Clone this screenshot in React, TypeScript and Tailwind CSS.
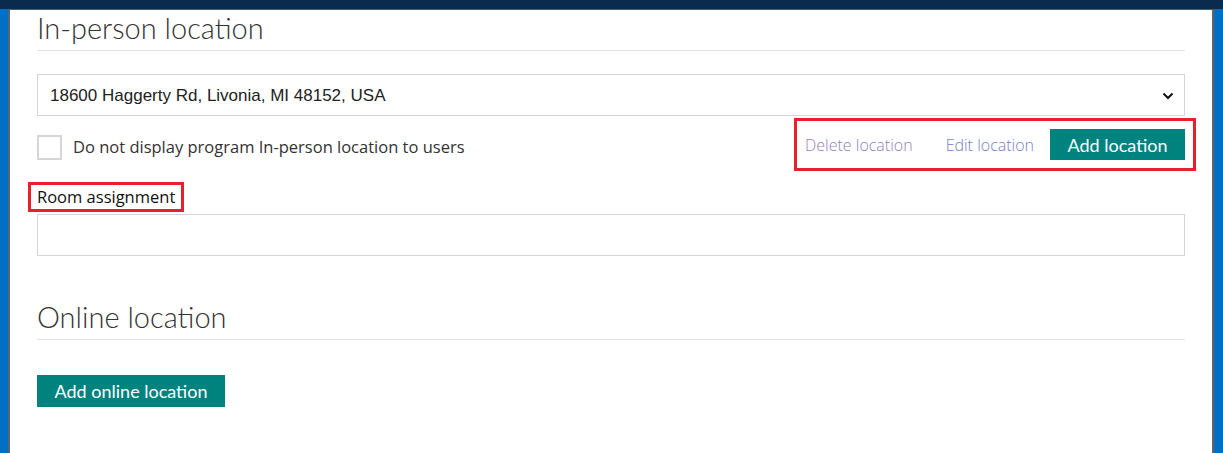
import React from "react";

export default function App() {
  const heading = { fontFamily: "Lato, 'Open Sans', sans-serif" };
  const ui = { fontFamily: "'Open Sans', 'Noto Sans', sans-serif" };
  return (
    <div className="w-[1223px] h-[453px] overflow-hidden bg-white flex flex-col">
      <div className="h-[9px] bg-[#0b2b4e] shrink-0" />
      <div className="h-px bg-[#4a5b6c] shrink-0" />
      <div className="flex flex-1 min-h-0">
        <div className="w-[8px] bg-[#0070c4]" />
        <div className="w-[2px] bg-[#5f6368]" />
        <main className="flex-1 px-[27px] flex flex-col">
          <h2
            style={heading}
            className="text-[29px] leading-[36px] text-[#333333] font-light border-b border-[#e3e3e3] h-[41px]"
          >
            In-person location
          </h2>
          <div className="mt-[23px] h-[42px] border border-[#d5d5d5] flex items-center justify-between pl-[12px] pr-[10px]">
            <span
              style={{ fontFamily: "'Liberation Sans', Arial, sans-serif" }}
              className="text-[17px] text-[#222222] mt-[2px]"
            >
              18600 Haggerty Rd, Livonia, MI 48152, USA
            </span>
            <svg width="12" height="8" viewBox="0 0 12 8" className="mt-[1px]">
              <path d="M1.5 1.5 L6 6 L10.5 1.5" fill="none" stroke="#111" strokeWidth="2" />
            </svg>
          </div>
          <div className="flex items-start justify-between mt-[13px] h-[31px]">
            <label className="flex items-center gap-[11px] mt-[6px]" style={ui}>
              <span className="w-[25px] h-[25px] border-2 border-[#d6d6d6] bg-white" />
              <span className="text-[16.5px] text-[#333333]">
                Do not display program In-person location to users
              </span>
            </label>
            <div className="flex items-center outline-solid outline-[3px] outline-[#e8202a] outline-offset-[8px]">
              <span style={ui} className="text-[16px] font-light text-[#9680bf] mr-[33px]">
                Delete location
              </span>
              <span style={ui} className="text-[16px] font-light text-[#7682bf] mr-[16px]">
                Edit location
              </span>
              <button
                style={heading}
                className="h-[31px] w-[135px] bg-[#00827f] text-white text-[18px] leading-none"
              >
                Add location
              </button>
            </div>
          </div>
          <div className="mt-[22px]">
            <span
              style={ui}
              className="inline-block -ml-[9px] border-[3px] border-[#e8202a] px-[6px] leading-[24px] text-[16.5px] text-[#111111]"
            >
              Room assignment
            </span>
          </div>
          <div className="mt-[2px] h-[42px] border border-[#d5d5d5]" />
          <h2
            style={heading}
            className="mt-[43px] text-[29px] leading-[36px] text-[#333333] font-light border-b border-[#e3e3e3] h-[41px]"
          >
            Online location
          </h2>
          <div className="mt-[35px]">
            <button
              style={heading}
              className="h-[32px] w-[188px] bg-[#00827f] text-white text-[18px] leading-none"
            >
              Add online location
            </button>
          </div>
        </main>
        <div className="w-[2px] bg-[#5f6368]" />
        <div className="w-[9px] bg-[#0070c4]" />
      </div>
    </div>
  );
}
